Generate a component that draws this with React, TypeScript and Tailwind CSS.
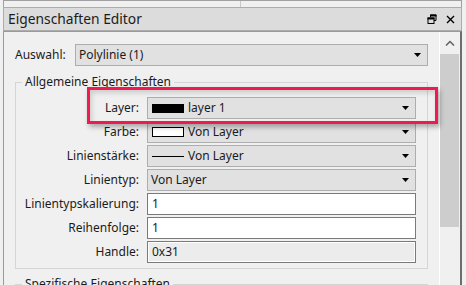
import React from 'react';

function Arrow() {
  return (
    <svg width="7" height="4" viewBox="0 0 7 4" className="shrink-0">
      <path d="M0 0H7L3.5 4Z" fill="#000" />
    </svg>
  );
}

function Combo({ children, className = '' }: { children: React.ReactNode; className?: string }) {
  return (
    <div className={`h-[22px] border border-[#adadad] bg-[#e1e1e1] flex items-center pl-[3px] pr-[6px] ${className}`}>
      <div className="flex-1 flex items-center gap-[4px] whitespace-nowrap">{children}</div>
      <Arrow />
    </div>
  );
}

function Field({ value, disabled }: { value: string; disabled?: boolean }) {
  return (
    <div
      className={`h-[22px] border border-[#7a7a7a] flex items-center pl-[4px] ${
        disabled ? 'bg-[#ececec] shadow-[inset_0_0_0_1px_#ffffff]' : 'bg-white'
      }`}
    >
      {value}
    </div>
  );
}

const rows: { label: string; el: React.ReactNode }[] = [
  {
    label: 'Layer:',
    el: (
      <Combo>
        <span className="ml-[1px] w-[32px] h-[9px] bg-black" />
        <span>layer 1</span>
      </Combo>
    ),
  },
  {
    label: 'Farbe:',
    el: (
      <Combo>
        <span className="ml-[1px] w-[32px] h-[10px] border border-black bg-white" />
        <span>Von Layer</span>
      </Combo>
    ),
  },
  {
    label: 'Linienstärke:',
    el: (
      <Combo>
        <span className="ml-[1px] w-[32px] h-px bg-black" />
        <span>Von Layer</span>
      </Combo>
    ),
  },
  { label: 'Linientyp:', el: <Combo>Von Layer</Combo> },
  { label: 'Linientypskalierung:', el: <Field value="1" /> },
  { label: 'Reihenfolge:', el: <Field value="1" /> },
  { label: 'Handle:', el: <Field value="0x31" disabled /> },
];

export default function App() {
  return (
    <div className="relative w-[466px] h-[285px] overflow-hidden bg-[#f0f0f0] text-[12px] text-[#1b1b1b] font-['Noto_Sans',sans-serif]">
      {/* top strip */}
      <div className="ml-[3px] w-[459px] h-[7px] border-t border-x border-[#a0a0a0] flex">
        <div className="w-[237px] border-r border-[#c8c8c8]" />
      </div>

      {/* title bar */}
      <div className="ml-[3px] w-[459px] h-[24px] border border-[#acacac] bg-[#dcdcdc] flex items-center pl-[4px] pr-[5px]">
        <span className="flex-1 leading-none text-[13.8px]">Eigenschaften Editor</span>
        <svg width="10" height="10" viewBox="0 0 10 10" className="mr-[9px]">
          <path d="M3.5 3V1H9V6.5H7" fill="none" stroke="#000" strokeWidth="1" />
          <path d="M3 1.5H9.5" stroke="#000" strokeWidth="2" />
          <rect x="1" y="4" width="6" height="5.5" fill="none" stroke="#000" strokeWidth="1" />
          <path d="M0.5 4.5H7.5" stroke="#000" strokeWidth="2" />
        </svg>
        <svg width="9" height="9" viewBox="0 0 9 9" className="mr-[1px]">
          <path d="M1 1L8 8M8 1L1 8" stroke="#000" strokeWidth="1.4" />
        </svg>
      </div>

      {/* panel */}
      <div className="ml-[3px] w-[459px] h-[260px] border-l border-t border-r-2 border-l-[#9a9a9a] border-t-[#9a9a9a] border-r-[#6e6e6e] flex">
        <div className="w-[435px] pt-[12px]">
          <div className="flex items-center pl-[11px]">
            <span className="w-[60px]">Auswahl:</span>
            <Combo className="w-[353px] h-[21px]">Polylinie (1)</Combo>
          </div>

          <fieldset className="ml-[11px] mt-[8px] w-[413px] border border-[#d5d5d5] pb-[5px]">
            <legend className="ml-[6px] px-[3px] leading-[16px]">Allgemeine Eigenschaften</legend>
            <div className="grid grid-cols-[123px_269px] gap-x-[8px] gap-y-[2px] mt-[7px]">
              {rows.map((r) => (
                <React.Fragment key={r.label}>
                  <div className="flex items-center justify-end h-[22px] whitespace-nowrap">{r.label}</div>
                  {r.el}
                </React.Fragment>
              ))}
            </div>
          </fieldset>

          <fieldset className="ml-[11px] mt-[7px] w-[413px] h-[40px] border border-[#d5d5d5]">
            <legend className="ml-[6px] px-[3px] leading-[16px]">Spezifische Eigenschaften</legend>
          </fieldset>
        </div>

        <div className="w-px bg-white" />

        {/* scrollbar */}
        <div className="w-[20px] flex flex-col">
          <div className="h-[22px] flex items-center justify-center">
            <svg width="10" height="6" viewBox="0 0 10 6">
              <path d="M1 5.5L5 1.5L9 5.5" fill="none" stroke="#606060" strokeWidth="1.5" />
            </svg>
          </div>
          <div className="h-[173px] mr-px bg-[#cdcdcd]" />
        </div>
      </div>

      {/* highlight */}
      <div className="absolute left-[87px] top-[87px] w-[351px] h-[37px] border-[3px] border-[#ef1a4f] shadow-[2px_3px_5px_rgba(0,0,0,0.3),inset_2px_3px_5px_rgba(0,0,0,0.15)]" />
    </div>
  );
}
